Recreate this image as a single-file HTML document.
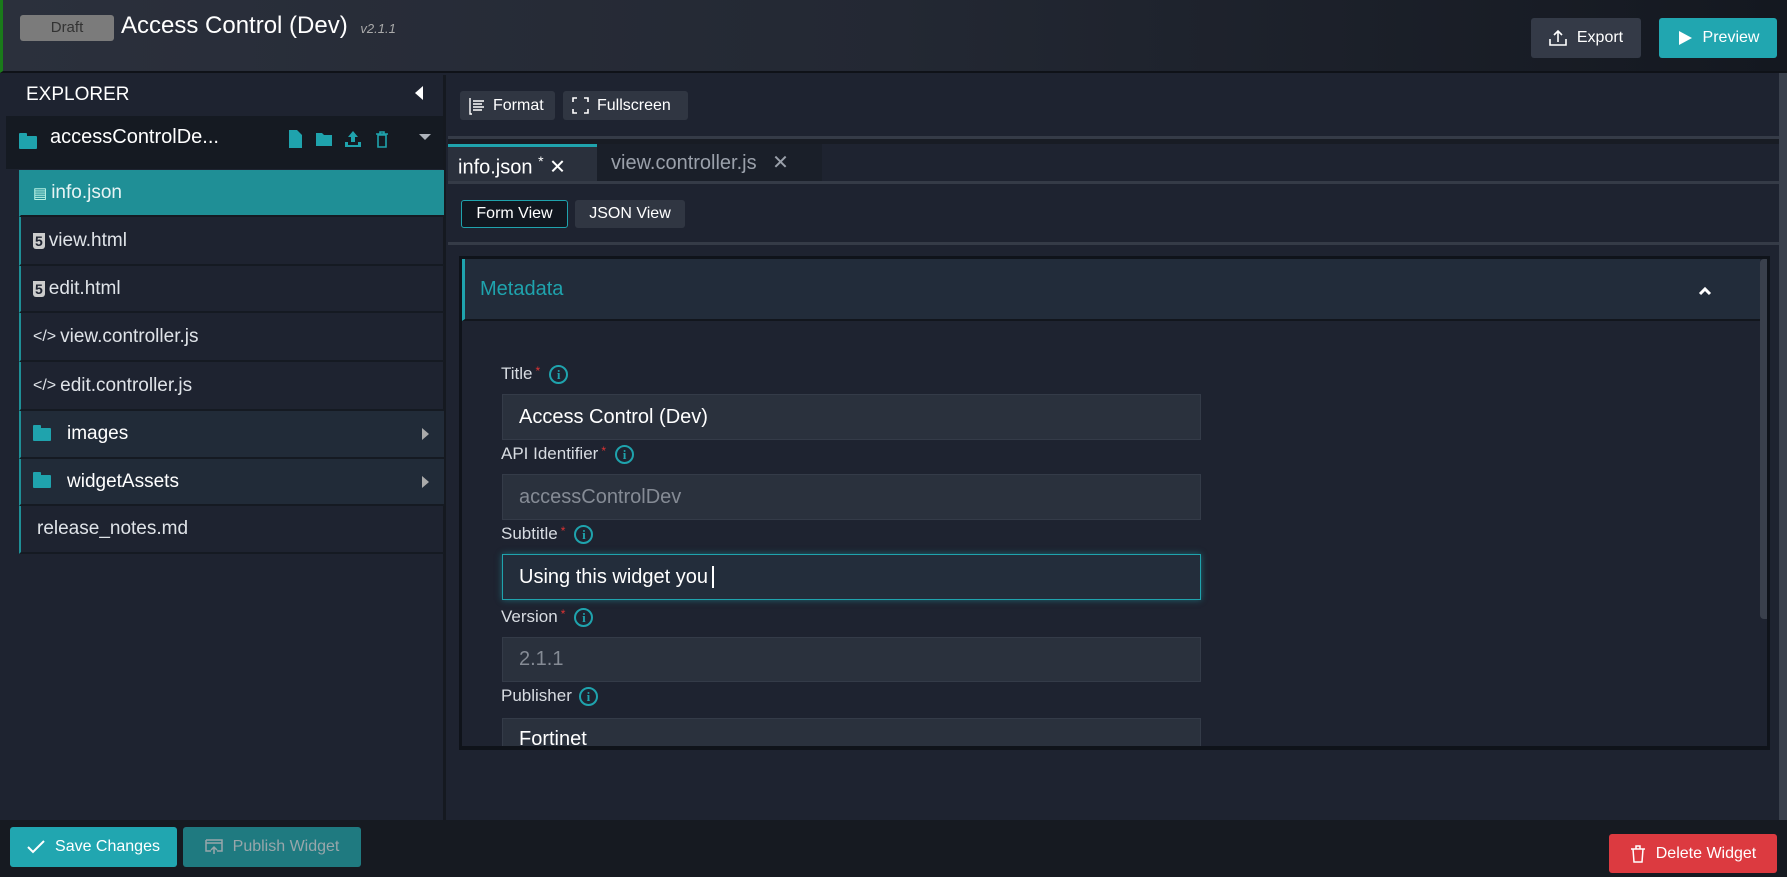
<!DOCTYPE html>
<html><head><meta charset="utf-8"><style>
*{box-sizing:border-box;margin:0;padding:0}
body{width:1787px;height:877px;overflow:hidden;background:#1e2330;font-family:"Liberation Sans",sans-serif;color:#e8eaee;position:relative}
.abs{position:absolute}
.hdr{left:0;top:0;width:1787px;height:73px;background:linear-gradient(90deg,#2b303c 0%,#232833 50%,#141820 100%);border-left:3px solid #1a7a1a;border-bottom:2px solid #0f1218}
.draft{left:20px;top:15px;width:94px;height:26px;background:#7b7b7b;border-radius:3px;color:#333;font-size:15px;text-align:center;line-height:26px}
.btn{border-radius:3px;font-size:16px;display:flex;align-items:center;justify-content:center;gap:10px;color:#fff}
.side{left:6px;top:75px;width:440px;height:745px;background:#1e2330;border-right:3px solid #151920}
.row{position:absolute;left:19px;width:425px;border-left:2px solid #1f8f96;border-bottom:2px solid #151a22;font-size:19px;color:#dfe3e8;display:flex;align-items:center;padding-left:12px;gap:4px}
.fold{width:18px;height:13px;background:#1fa3ad;border-radius:1px;position:relative;display:inline-block}
.fold:before{content:"";position:absolute;left:0;top:-3px;width:8px;height:4px;background:#1fa3ad;border-radius:1px 1px 0 0}
.tb{background:#303642;border-radius:3px;font-size:16px;color:#fff;display:flex;align-items:center;gap:8px;padding-left:9px}
.line{left:448px;width:1331px;height:3px;background:#353b47}
.lab{position:absolute;left:501px;font-size:17px;color:#d8dce2;display:flex;align-items:center;gap:3px}
.lab .s{color:#d33;font-size:12px;align-self:flex-start}
.lab .i{width:19px;height:19px;border:2px solid #1fa3ad;border-radius:50%;color:#1fa3ad;font-size:13px;font-weight:bold;text-align:center;line-height:15px;margin-left:6px;font-family:"Liberation Serif",serif}
.inp{position:absolute;left:502px;width:699px;height:46px;background:#2a313d;border:1px solid #343b48;font-size:20px;padding-left:16px;display:flex;align-items:center;color:#fff}
.inp.d{color:#858b95}
</style></head><body>
<div class="abs hdr"></div>
<div class="abs draft">Draft</div>
<div class="abs" style="left:121px;top:12px;font-size:24px;color:#fff">Access Control (Dev) <span style="font-size:13px;color:#aaa;font-style:italic;margin-left:6px">v2.1.1</span></div>
<div class="abs btn" style="left:1531px;top:18px;width:110px;height:40px;background:#343a47"><svg width="18" height="18" viewBox="0 0 18 18" fill="none" stroke="#fff" stroke-width="1.6"><path d="M9 13V2M5 6l4-4 4 4M1 10v6h16v-6"/></svg>Export</div>
<div class="abs btn" style="left:1659px;top:18px;width:118px;height:40px;background:#21a6b0"><svg width="16" height="16" viewBox="0 0 16 16"><path d="M2 1l13 7-13 7z" fill="#fff"/></svg>Preview</div>

<div class="abs side"></div>
<div class="abs" style="left:26px;top:84px;font-size:19px;color:#fff">EXPLORER</div>
<div class="abs" style="left:415px;top:86px;width:0;height:0;border-top:7px solid transparent;border-bottom:7px solid transparent;border-right:8px solid #fff"></div>
<div class="abs" style="left:6px;top:116px;width:437px;height:53px;background:#151a22"></div>
<div class="abs" style="left:19px;top:136px"><span class="fold"></span></div>
<div class="abs" style="left:50px;top:126px;font-size:20px;color:#fff">accessControlDe...</div>
<svg class="abs" style="left:287px;top:129px" width="150" height="20" viewBox="0 0 150 20"><path d="M2 1h8l5 5v13H2z" fill="#1fa3ad"/><path d="M29 4h6l2 2h8v11H29z" fill="#1fa3ad"/><path d="M66 2l5 6h-3v5h-4V8h-3zM58 13h3v3h10v-3h3v5H58z" fill="#1fa3ad"/><path d="M89 5h12M93 5V3h4v2M91 6h8v12h-8z" stroke="#1fa3ad" stroke-width="1.6" fill="none"/><path d="M132 5h12l-6 6z" fill="#aeb3bb"/></svg>

<div class="row" style="top:170px;height:47px;background:#1f8f96;color:#e8f4f4"><span style="font-size:15px;color:#cfe">▤</span>info.json</div>
<div class="row" style="top:217px;height:49px"><b style="font-size:14px;background:#ccc;color:#1e2330;padding:0 2px;border-radius:0 0 3px 3px">5</b>view.html</div>
<div class="row" style="top:266px;height:47px"><b style="font-size:14px;background:#ccc;color:#1e2330;padding:0 2px;border-radius:0 0 3px 3px">5</b>edit.html</div>
<div class="row" style="top:313px;height:49px"><span style="font-size:16px">&lt;/&gt;</span>view.controller.js</div>
<div class="row" style="top:362px;height:49px"><span style="font-size:16px">&lt;/&gt;</span>edit.controller.js</div>
<div class="row" style="top:411px;height:48px;background:#212b38;color:#fff;gap:16px"><span class="fold"></span>images<span style="position:absolute;right:15px;top:17px;border-top:6px solid transparent;border-bottom:6px solid transparent;border-left:7px solid #aaa"></span></div>
<div class="row" style="top:459px;height:47px;background:#212b38;color:#fff;gap:16px"><span class="fold"></span>widgetAssets<span style="position:absolute;right:15px;top:17px;border-top:6px solid transparent;border-bottom:6px solid transparent;border-left:7px solid #aaa"></span></div>
<div class="row" style="top:506px;height:48px;padding-left:16px">release_notes.md</div>

<div class="abs tb" style="left:460px;top:91px;width:95px;height:29px"><svg width="16" height="18" viewBox="0 0 16 18" stroke="#fff" stroke-width="1.4" fill="none"><path d="M1 1v16h2M4 4h11M4 7h9M4 10h11M4 13h9"/></svg>Format</div>
<div class="abs tb" style="left:563px;top:91px;width:125px;height:29px"><svg width="17" height="17" viewBox="0 0 17 17" stroke="#fff" stroke-width="1.6" fill="none"><path d="M1 5V1h4M12 1h4v4M16 12v4h-4M5 16H1v-4"/></svg>Fullscreen</div>
<div class="abs line" style="top:136px"></div>
<div class="abs" style="left:448px;top:139px;width:1331px;height:5px;background:#181c24"></div>
<div class="abs" style="left:448px;top:144px;width:149px;height:38px;background:#2a303c;border-top:3px solid #1fa3ad;font-size:20px;color:#fff;padding:6px 0 0 10px">info.json <sup style="font-size:14px">*</sup> <span style="font-size:20px">✕</span></div>
<div class="abs" style="left:597px;top:144px;width:225px;height:38px;background:#1a1f29;font-size:20px;color:#9aa0aa;padding:6px 0 0 14px">view.controller.js <span style="margin-left:10px">✕</span></div>
<div class="abs line" style="top:181px"></div>
<div class="abs" style="left:461px;top:200px;width:107px;height:28px;background:#111720;border:1px solid #1fa3ad;border-radius:3px;font-size:16px;text-align:center;line-height:26px;color:#fff">Form View</div>
<div class="abs" style="left:575px;top:200px;width:110px;height:28px;background:#303642;border-radius:3px;font-size:16px;text-align:center;line-height:28px;color:#fff">JSON View</div>
<div class="abs line" style="top:242px"></div>

<div class="abs" style="left:459px;top:256px;width:1311px;height:494px;border:3px solid #0f131a;background:#1e2330;overflow:hidden">
 <div style="position:absolute;left:0;top:0;width:1298px;height:62px;background:#222c3a;border-left:3px solid #1fa3ad;border-bottom:2px solid #12161d;font-size:20px;color:#1fa3ad;padding:19px 0 0 15px">Metadata</div>
 <svg style="position:absolute;left:1236px;top:27px" width="14" height="10" viewBox="0 0 14 10"><path d="M2 8l5-5 5 5" stroke="#fff" stroke-width="3" fill="none"/></svg>
 <div style="position:absolute;left:1298px;top:0;width:10px;height:360px;background:#3a404c;border-radius:4px"></div>
</div>
<div class="lab" style="top:364px">Title<span class="s">*</span><span class="i">i</span></div>
<div class="inp" style="top:394px">Access Control (Dev)</div>
<div class="lab" style="top:444px">API Identifier<span class="s">*</span><span class="i">i</span></div>
<div class="inp d" style="top:474px">accessControlDev</div>
<div class="lab" style="top:524px">Subtitle<span class="s">*</span><span class="i">i</span></div>
<div class="inp" style="top:554px;background:#232d3b;border:1px solid #1fa3ad;box-shadow:0 0 6px #1fa3ad88">Using this widget you <span style="display:inline-block;width:2px;height:22px;background:#fff;margin-left:4px"></span></div>
<div class="lab" style="top:607px">Version<span class="s">*</span><span class="i">i</span></div>
<div class="inp d" style="top:637px;height:45px">2.1.1</div>
<div class="lab" style="top:686px">Publisher<span class="i" style="margin-left:4px">i</span></div>
<div class="inp" style="top:718px;height:28px;align-items:flex-start;padding-top:9px;overflow:hidden;border-bottom:none">Fortinet</div>
<div class="abs" style="left:459px;top:746px;width:1311px;height:4px;background:#0f131a"></div>
<div class="abs" style="left:1779px;top:73px;width:8px;height:747px;background:#3a404c"></div>

<div class="abs" style="left:0;top:820px;width:1787px;height:57px;background:#161a21"></div>
<div class="abs btn" style="left:10px;top:827px;width:167px;height:40px;background:#21a6b0"><svg width="18" height="14" viewBox="0 0 18 14"><path d="M1 7l5 5L17 1" stroke="#fff" stroke-width="2" fill="none"/></svg>Save Changes</div>
<div class="abs btn" style="left:183px;top:827px;width:178px;height:40px;background:#1f7a80;color:#98a6aa"><svg width="18" height="16" viewBox="0 0 18 16" stroke="#98a6aa" stroke-width="1.5" fill="none"><path d="M1 1h16v11h-5M6 12H1V1M1 4h16M9 15V8M6 11l3-3 3 3"/></svg>Publish Widget</div>
<div class="abs btn" style="left:1609px;top:834px;width:168px;height:39px;background:#dc3a40"><svg width="16" height="18" viewBox="0 0 16 18" stroke="#fff" stroke-width="1.5" fill="none"><path d="M1 4h14M6 4V1h4v3M3 4l1 13h8l1-13"/></svg>Delete Widget</div>
</body></html>
